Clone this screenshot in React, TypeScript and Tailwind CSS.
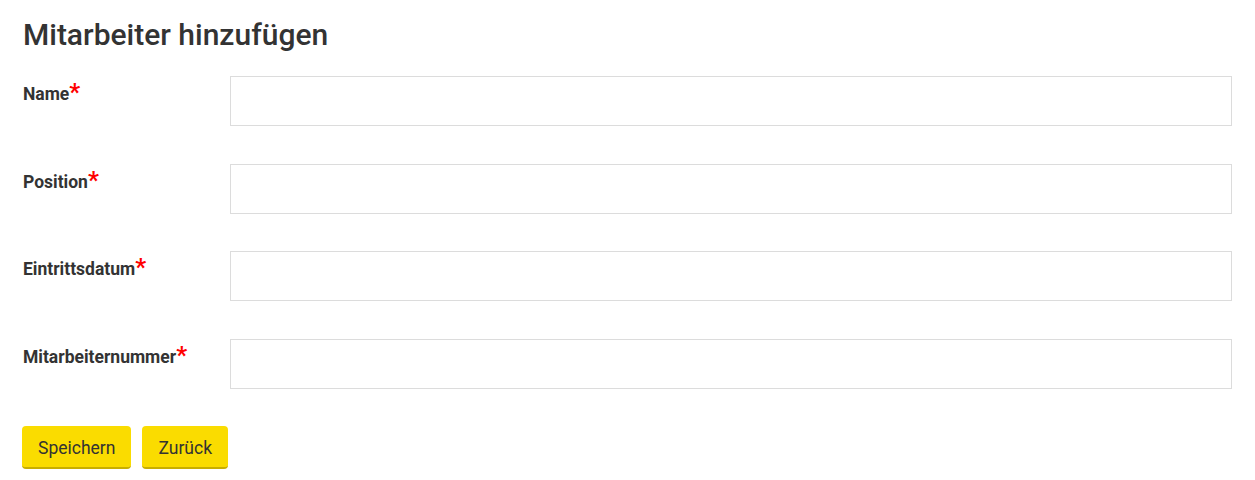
import React from 'react';

const fields = ['Name', 'Position', 'Eintrittsdatum', 'Mitarbeiternummer'];

const App: React.FC = () => {
  return (
    <div className="px-[23px] pt-[15px] font-['Roboto',sans-serif] text-[#333]">
      <h1 className="text-[30px] leading-[40px] font-medium mb-[21px]">Mitarbeiter hinzufügen</h1>

      <form className="flex flex-col">
        {fields.map((label, i) => (
          <div key={label} className={`flex ${i === 1 ? 'mb-[37px]' : 'mb-[38px]'}`}>
            <label className="w-[207px] shrink-0 pt-[4px] text-[17.5px] leading-[24px] font-bold">
              {label}
              <span className="text-[#ff0000] text-[24px] leading-none">*</span>
            </label>
            <input type="text" className="flex-1 h-[50px] border border-[#dcdcdc] bg-white outline-none" />
          </div>
        ))}

        <div className="flex gap-[11px] -ml-px -mt-px">
          <button type="button" className="h-[43px] px-[16px] bg-[#fadc00] border-b-[2px] border-[#c8ae00] rounded-[4px] text-[17.5px] text-[#333] leading-none pt-[4px]">
            Speichern
          </button>
          <button type="button" className="h-[43px] px-[16px] bg-[#fadc00] border-b-[2px] border-[#c8ae00] rounded-[4px] text-[17.5px] text-[#333] leading-none pt-[4px]">
            Zurück
          </button>
        </div>
      </form>
    </div>
  );
};

export default App;
